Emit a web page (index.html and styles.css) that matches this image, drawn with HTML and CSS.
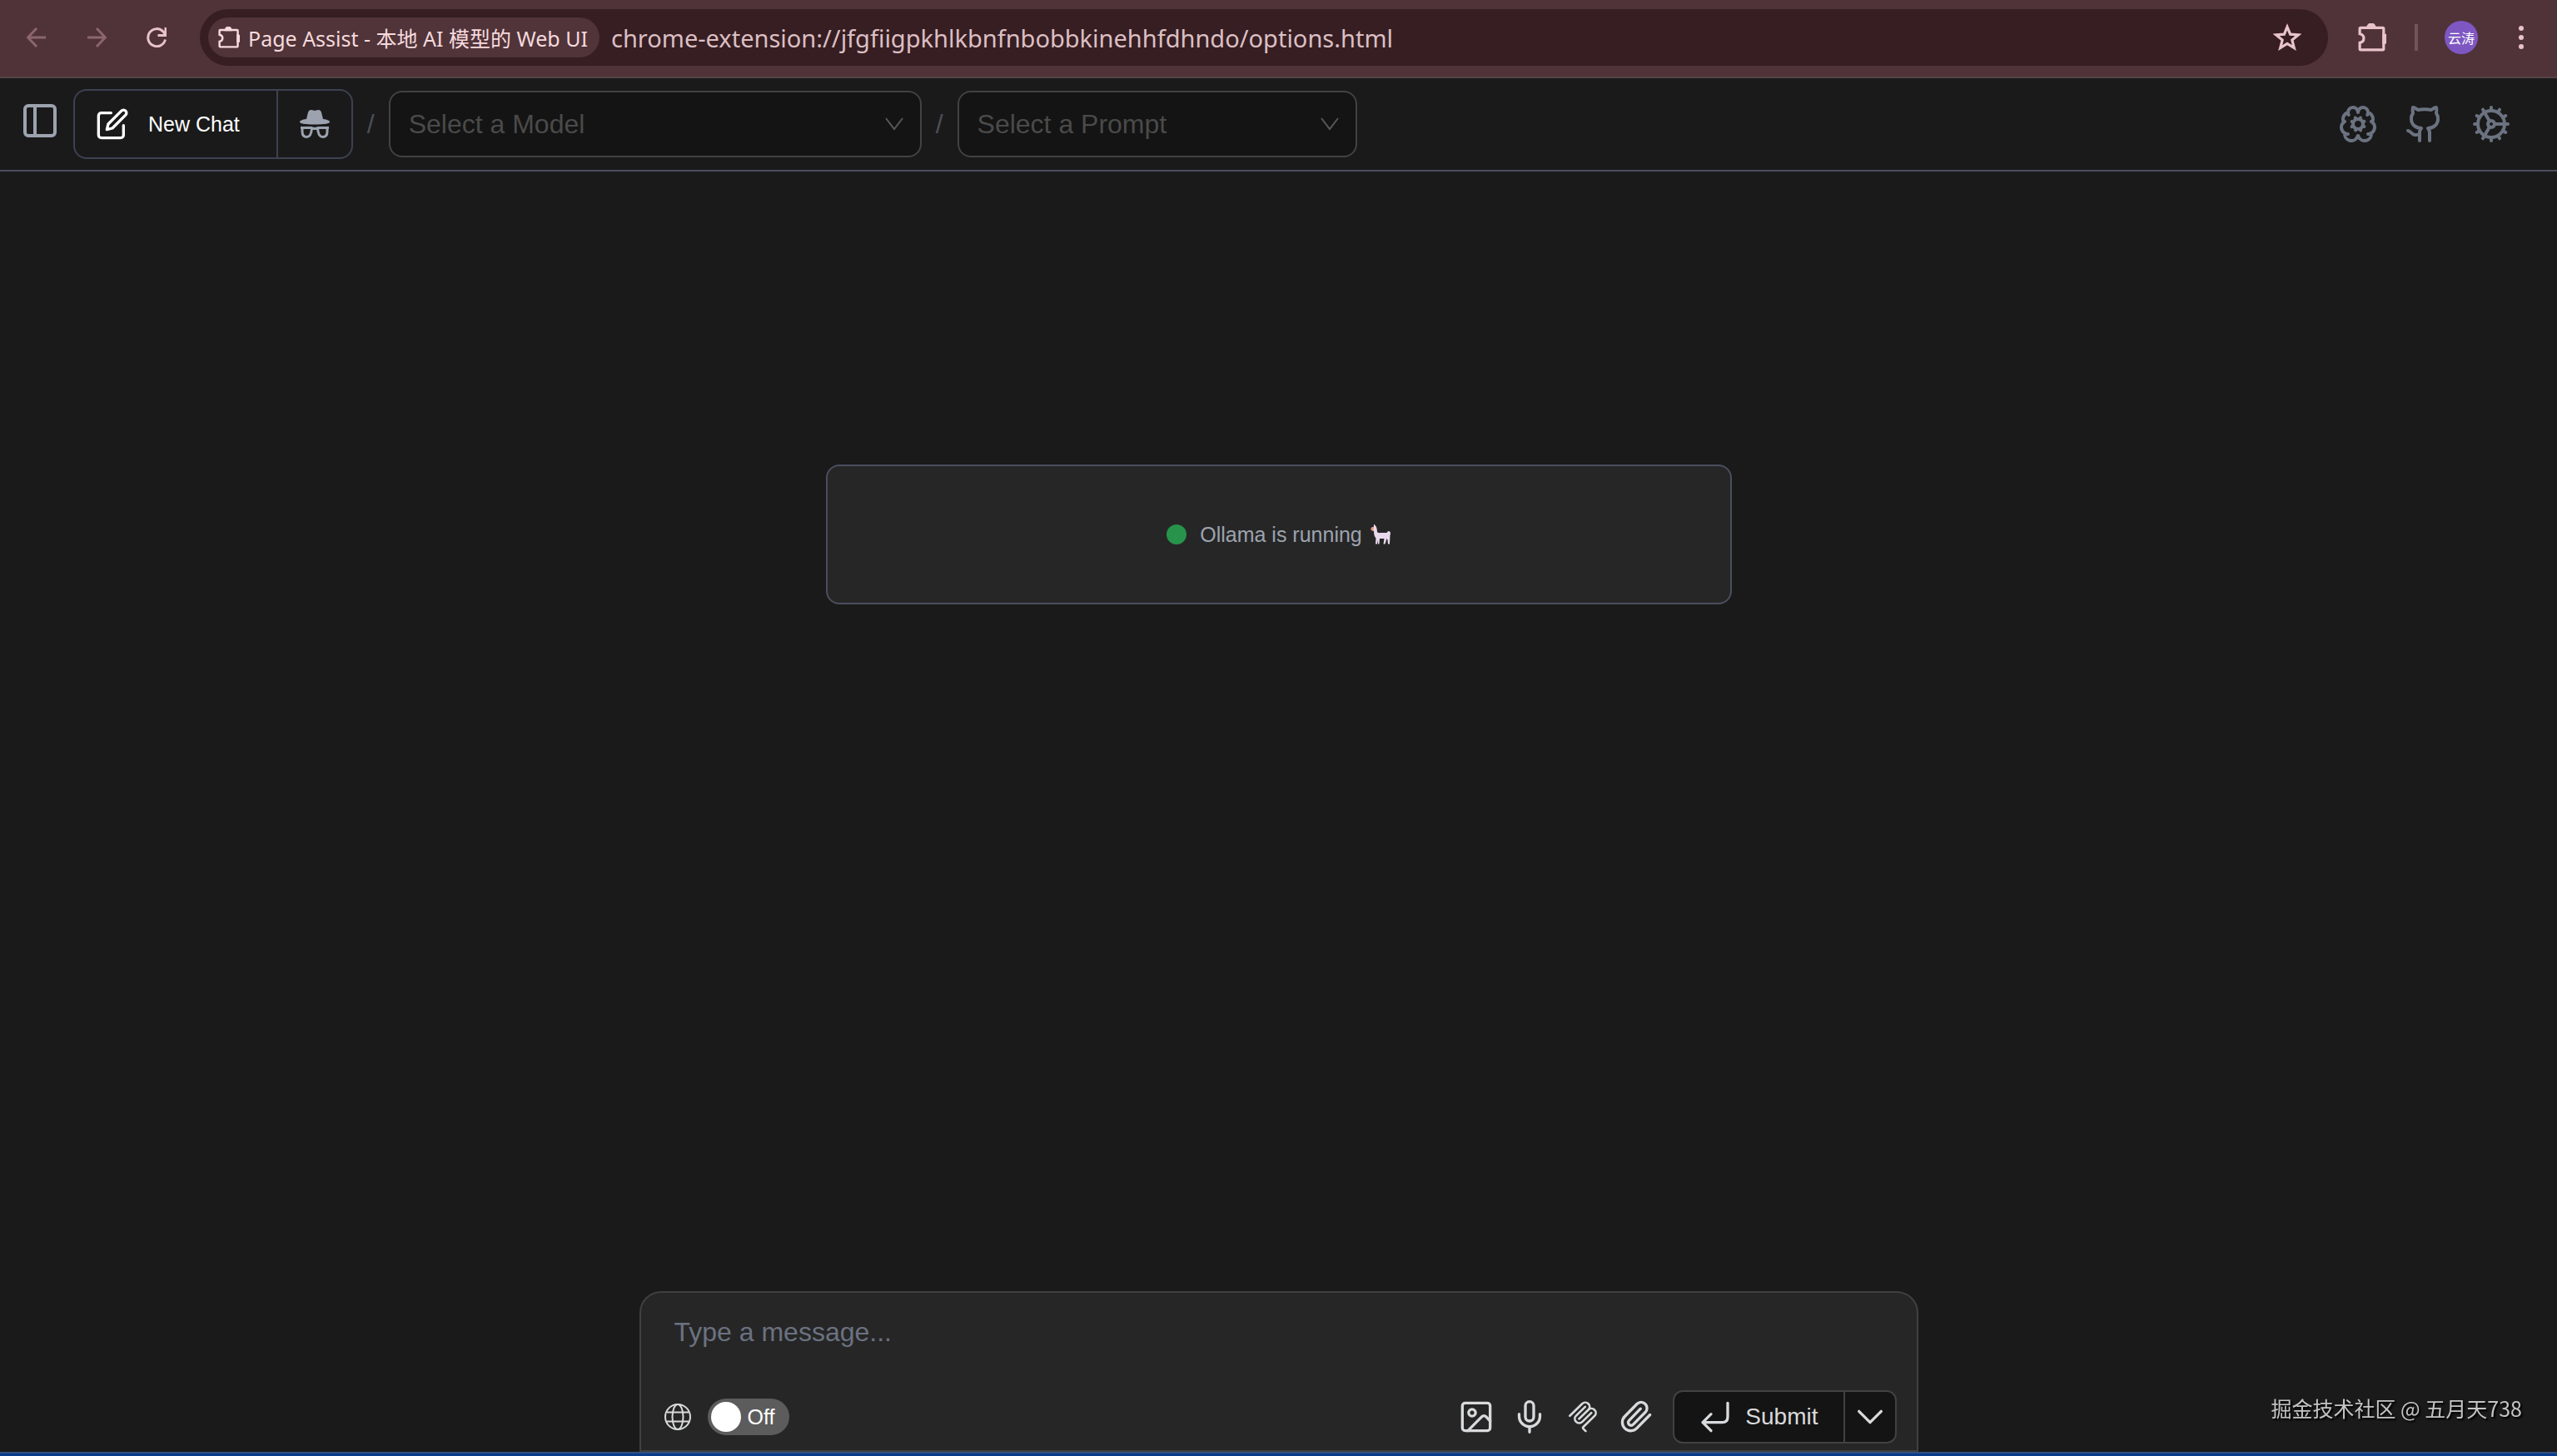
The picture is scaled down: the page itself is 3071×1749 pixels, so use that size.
FILE: index.html
```html
<!DOCTYPE html>
<html lang="zh-CN">
<head>
    <meta charset="UTF-8" />
    <meta name="viewport" content="width=device-width, initial-scale=1.0">
    <title>Page Assist - 本地 AI 模型的 Web UI</title>
    <link rel="stylesheet" href="styles.css">
</head>
<body>
    <nav class="toolbar">
        <button class="nav-button disabled" aria-label="Back">
            <svg viewBox="0 0 24 24"><path d="M23 12H1.5M12 1 1.5 12 12 23" /></svg>
        </button>
        <button class="nav-button disabled" aria-label="Forward">
            <svg viewBox="0 0 24 24"><path d="M1 12h21.5M12 1l10.5 11L12 23" /></svg>
        </button>
        <button class="nav-button" aria-label="Reload">
            <svg viewBox="0 0 24 24"><path d="M22.5 14.5A10.5 10.5 0 1 1 20 5l2.5 3.5M23 0v9.5h-9.5" /></svg>
        </button>
        <div class="address">
            <span class="chip">
                <svg class="puzzle" viewBox="0 0 32 32"><path d="M3 5h25q1 0 1 1v23q0 1-1 1H3q-1 0-1-1v-7c6-1 6-9 0-10V6q0-1 1-1z" /><path class="solid" d="M11 5a4 4 0 0 1 8 0zM29 13a4 4 0 0 1 0 9z" /></svg>
                Page Assist - 本地 AI 模型的 Web UI
            </span>
            <input class="url" type="text" aria-label="Address" value="chrome-extension://jfgfiigpkhlkbnfnbobbkinehhfdhndo/options.html">
            <button class="star" aria-label="Bookmark">
                <svg viewBox="0 0 32 32"><path d="m16 4 3.4 8.4 9.1.7-7 5.8 2.3 8.9L16 23l-7.8 4.8 2.3-8.9-7-5.8 9.1-.7z" /></svg>
            </button>
        </div>
        <div class="toolbar-actions">
            <button aria-label="Extensions">
                <svg class="puzzle" viewBox="0 0 32 32"><path d="M3 5h25q1 0 1 1v23q0 1-1 1H3q-1 0-1-1v-7c6-1 6-9 0-10V6q0-1 1-1z" /><path class="solid" d="M11 5a4 4 0 0 1 8 0zM29 13a4 4 0 0 1 0 9z" /></svg>
            </button>
            <span class="separator"></span>
            <button class="avatar">云涛</button>
            <button class="more" aria-label="Menu">
                <svg viewBox="0 0 6 28"><circle cx="3" cy="3" r="3" /><circle cx="3" cy="14" r="3" /><circle cx="3" cy="25" r="3" /></svg>
            </button>
        </div>
    </nav>

    <header>
        <button class="sidebar-button" aria-label="Sidebar">
            <svg class="icon" viewBox="0 0 24 24"><rect x="3" y="3" width="18" height="18" rx="2" /><path d="M9 3v18" /></svg>
        </button>
        <div class="chat-group">
            <button class="new-chat">
                <svg class="icon" viewBox="0 0 24 24"><path d="M11 4H4a2 2 0 0 0-2 2v14a2 2 0 0 0 2 2h14a2 2 0 0 0 2-2v-7" /><path d="M18.5 2.5a2.12 2.12 0 0 1 3 3L12 15l-4 1 1-4z" /></svg>
                New Chat
            </button>
            <button class="incognito" aria-label="Temporary chat">
                <svg viewBox="0 0 36 34"><path d="M8 11 10 3Q11 0 13.500 0q1.500 0 4.500 1 3-1 4.500-1 2.500 0 3.500 3l2 8q8 1 8 3.500 0 3-18 3t-18-3Q0 12 8 11z" /><path class="line" d="M1 21.500h13q4 2 8 0h13M3 22v4c0 4 2 6.500 5.500 6.500S14 29 14.500 22M33 22v4c0 4-2 6.500-5.500 6.500S22 29 21.500 22" /></svg>
            </button>
        </div>
        <span class="slash">/</span>
        <div class="select-box model">
            <select aria-label="Model"><option>Select a Model</option></select>
            <svg viewBox="0 0 24 24"><path d="M2 5l10 13L22 5" /></svg>
        </div>
        <span class="slash">/</span>
        <div class="select-box prompt">
            <select aria-label="Prompt"><option>Select a Prompt</option></select>
            <svg viewBox="0 0 24 24"><path d="M2 5l10 13L22 5" /></svg>
        </div>
        <div class="header-links">
            <a href="#" aria-label="Model settings">
                <svg class="icon" viewBox="0 0 24 24"><path d="M12 5a3 3 0 1 0-5.997.125 4 4 0 0 0-2.526 5.771 4 4 0 0 0 .556 6.588 4 4 0 0 0 7.636 2.106 3.2 3.2 0 0 0 .164-.546c.028-.13.306-.13.335 0a3.2 3.2 0 0 0 .163.546 4 4 0 0 0 7.636-2.106 4 4 0 0 0 .556-6.588 4 4 0 0 0-2.526-5.771A3 3 0 1 0 12 5M17.599 6.5a3 3 0 0 0 .399-1.375M6.003 5.125A3 3 0 0 0 6.401 6.5M3.477 10.896a4 4 0 0 1 .585-.396M19.938 10.5a4 4 0 0 1 .585.396M6 18a4 4 0 0 1-1.967-.516M19.967 17.484A4 4 0 0 1 18 18" /><circle cx="12" cy="12" r="3" /><path d="m15.7 10.4-.9.4M9.2 13.2l-.9.4M13.6 15.7l-.4-.9M10.8 9.2l-.4-.9M15.7 13.5l-.9-.4M9.2 10.9l-.9-.4M10.5 15.7l.4-.9M13.1 9.2l.4-.9" /></svg>
            </a>
            <a href="#" aria-label="GitHub">
                <svg class="icon" viewBox="0 0 24 24"><path d="M15 22v-4a4.8 4.8 0 0 0-1-3.5c3 0 6-2 6-5.5.08-1.25-.27-2.48-1-3.5.28-1.15.28-2.35 0-3.5 0 0-1 0-3 1.5-2.64-.5-5.36-.5-8 0C6 2 5 2 5 2c-.3 1.15-.3 2.35 0 3.5A5.4 5.4 0 0 0 4 9c0 3.5 3 5.5 6 5.5-.39.49-.68 1.05-.85 1.65-.17.6-.22 1.23-.15 1.85v4" /><path d="M9 18c-4.51 2-5-2-7-2" /></svg>
            </a>
            <a href="#" aria-label="Settings">
                <svg class="icon" viewBox="0 0 24 24"><circle cx="12" cy="12" r="8" /><circle cx="12" cy="12" r="2" /><path d="M12 2v2M12 22v-2m5 .66-1-1.73M11 10.27 7 3.34M20.66 17l-1.73-1M3.34 7l1.73 1M14 12h8M2 12h2M20.66 7l-1.73 1M3.34 17l1.73-1M17 3.34l-1 1.73M11 13.73l-4 6.93" /></svg>
            </a>
        </div>
    </header>

    <main>
        <div class="status">
            <span class="dot"></span>
            <p>Ollama is running</p>
            <svg class="llama" viewBox="0 0 24 24"><path class="body" d="M4 0q1-.5 1.500 1L7 3q1 3 1 6 1 1.500 4 1h7q1.500-.5 1.500-1.500 2-1 3 .5 1 1.500 0 4l-.5 10.500h-2l-.5-5-1-1.500-2 6.500h-2l1-6.500h-5.500l-.5 6.500H9l-.5-5-.5 5H6l.5-7Q4 14 4 8L1.500 7Q0 6 1 4l3-1.500z" /><path class="face" d="M1 4q1.500-1.500 3-1l-.5 4-2 .5Q0 6 1 4z" /></svg>
        </div>
    </main>

    <form class="composer">
        <textarea rows="1" aria-label="Message" placeholder="Type a message..."></textarea>
        <div class="composer-bar">
            <div class="search-toggle">
                <svg class="globe" viewBox="0 0 32 32"><circle cx="16" cy="16" r="15" /><ellipse cx="16" cy="16" rx="6.5" ry="15" /><path d="M3 10.5h26M3 21.5h26" /></svg>
                <label class="switch"><input type="checkbox" role="switch" aria-label="Search internet"><span>Off</span></label>
            </div>
            <div class="composer-actions">
                <button type="button" aria-label="Image">
                    <svg class="icon" viewBox="0 0 24 24"><rect x="2" y="2" width="20" height="20" rx="2" /><circle cx="9" cy="9" r="2.5" /><path d="m22 15-3-3.2a2 2 0 0 0-2.9 0L6 22" /></svg>
                </button>
                <button type="button" aria-label="Voice">
                    <svg class="icon" viewBox="0 0 24 24"><rect x="9" y="1" width="6" height="14" rx="3" /><path d="M19.5 10v1.5a7.5 7.5 0 0 1-15 0V10M12 19.5V23" /></svg>
                </button>
                <button type="button" aria-label="MCP">
                    <svg class="mcp" viewBox="-1 -1 26 26"><path d="M15.688 2.343a2.588 2.588 0 0 0-3.61 0l-9.626 9.44a.863.863 0 0 1-1.203 0 .823.823 0 0 1 0-1.18l9.626-9.44a4.313 4.313 0 0 1 6.016 0 4.116 4.116 0 0 1 1.204 3.54 4.3 4.3 0 0 1 3.609 1.18l.05.05a4.115 4.115 0 0 1 0 5.9l-8.706 8.537a.274.274 0 0 0 0 .393l1.788 1.754a.823.823 0 0 1 0 1.18.863.863 0 0 1-1.203 0l-1.788-1.753a1.92 1.92 0 0 1 0-2.754l8.706-8.538a2.47 2.47 0 0 0 0-3.54l-.05-.049a2.588 2.588 0 0 0-3.607-.003l-7.172 7.034-.002.002-.098.097a.863.863 0 0 1-1.204 0 .823.823 0 0 1 0-1.18l7.273-7.133a2.47 2.47 0 0 0-.003-3.537z" /><path d="M14.485 4.703a.823.823 0 0 0 0-1.18.863.863 0 0 0-1.204 0l-7.119 6.982a4.115 4.115 0 0 0 0 5.9 4.314 4.314 0 0 0 6.016 0l7.12-6.982a.823.823 0 0 0 0-1.18.863.863 0 0 0-1.204 0l-7.119 6.982a2.588 2.588 0 0 1-3.61 0 2.47 2.47 0 0 1 0-3.54l7.12-6.982z" /></svg>
                </button>
                <button type="button" aria-label="Attach file">
                    <svg class="icon" viewBox="0 0 24 24"><path d="m22 10.5-9.5 9.7a6 6 0 0 1-8.7-8.5l8.8-9a4.2 4.2 0 0 1 6 6l-8.7 8.8a2 2 0 0 1-3-2.9l8.3-8.5" /></svg>
                </button>
                <div class="submit-group">
                    <button type="submit" class="submit">
                        <svg class="icon" viewBox="0 0 24 24"><path d="M9 10l-6 6 6 6M3 16h14q4 0 4-4V2" /></svg>
                        Submit
                    </button>
                    <button type="button" class="submit-more" aria-label="More options">
                        <svg class="icon" viewBox="0 0 24 24"><path d="m4 8 8 8 8-8" /></svg>
                    </button>
                </div>
            </div>
        </div>
    </form>
    <footer></footer>
    <div class="watermark">掘金技术社区 @ 五月天738</div>
</body>
</html>
```
FILE: styles.css
```css
* {
    margin: 0;
    padding: 0;
    box-sizing: border-box;
}

body {
    height: 100vh;
    display: flex;
    flex-direction: column;
    background-color: #1a1a1a;
    color: white;
    font-family: "Liberation Sans", Arial, sans-serif;
    overflow: hidden;
}

button, input, select, textarea {
    border: none;
    background: none;
    color: inherit;
    font-family: inherit;
    outline: none;
}

a {
    color: inherit;
}

svg {
    display: block;
    flex-shrink: 0;
    fill: none;
    stroke: currentColor;
    stroke-width: 2;
}

.icon {
    stroke-linecap: round;
    stroke-linejoin: round;
}

.toolbar {
    display: flex;
    align-items: center;
    height: 94px;
    padding: 0 40px 2px 32px;
    background-color: #503338;
    border-bottom: 2px solid #564347;
    color: #e8c3c9;
    font-family: "Noto Sans", "Noto Sans CJK SC", sans-serif;
}

.nav-button {
    margin-right: 48px;
}

.nav-button svg {
    width: 24px;
    height: 24px;
    stroke-width: 3;
}

.nav-button.disabled {
    color: #8b666c;
}

.address {
    flex: 1;
    display: flex;
    align-items: center;
    height: 68px;
    margin-left: -8px;
    padding: 0 32px 0 10px;
    border-radius: 34px;
    background-color: #361e22;
}

.chip {
    display: flex;
    align-items: center;
    gap: 10px;
    height: 48px;
    padding: 0 14px 0 12px;
    border-radius: 24px;
    background-color: #503439;
    color: #f6dadd;
    font-size: 25px;
    white-space: nowrap;
}

.puzzle {
    width: 34px;
    height: 34px;
    stroke-width: 3;
}

.chip .puzzle {
    width: 26px;
    height: 26px;
}

.puzzle .solid {
    fill: currentColor;
}

.url {
    flex: 1;
    margin-left: 14px;
    color: #dcbfc3;
    font-size: 29px;
}

.star svg {
    width: 34px;
    height: 34px;
    stroke-width: 3;
}

.toolbar-actions {
    display: flex;
    align-items: center;
    margin-left: 36px;
}

.separator {
    width: 4px;
    height: 32px;
    margin: 0 32px 0 34px;
    background-color: #745459;
}

.avatar {
    width: 40px;
    height: 40px;
    margin-right: 49px;
    border-radius: 50%;
    background-color: #7e57c2;
    color: white;
    font-size: 16px;
    white-space: nowrap;
}

.more svg {
    width: 6px;
    height: 28px;
    fill: currentColor;
    stroke: none;
}

header {
    display: flex;
    align-items: center;
    height: 112px;
    padding: 0 55px 0 24px;
    border-bottom: 2px solid #4b4e5f;
}

.sidebar-button {
    margin-right: 16px;
    padding-bottom: 8px;
    color: #9ca3af;
}

.sidebar-button svg {
    width: 48px;
    height: 48px;
}

.chat-group {
    display: flex;
    height: 84px;
    border: 2px solid #3d4253;
    border-radius: 16px;
}

.new-chat {
    display: flex;
    align-items: center;
    gap: 23px;
    padding: 0 44px 0 25px;
    font-size: 25px;
    font-weight: 500;
}

.new-chat svg {
    width: 40px;
    height: 40px;
}

.incognito {
    width: 90px;
    border-left: 2px solid #3d4253;
    color: #9ca3af;
}

.incognito svg {
    width: 36px;
    height: 34px;
    margin: 0 auto;
    fill: currentColor;
    stroke: none;
}

.incognito .line {
    fill: none;
    stroke: currentColor;
    stroke-width: 3;
}

.slash {
    padding: 0 17px;
    color: #4b4e57;
    font-size: 32px;
}

.select-box {
    position: relative;
    height: 80px;
}

.select-box select {
    width: 100%;
    height: 100%;
    padding: 0 22px;
    border: 2px solid #424242;
    border-radius: 16px;
    background-color: #141414;
    color: #4a4a4a;
    font-size: 32px;
    appearance: none;
}

.select-box svg {
    position: absolute;
    top: 28px;
    right: 21px;
    width: 24px;
    height: 24px;
    color: #585858;
    pointer-events: none;
}

.model {
    width: 640px;
}

.prompt {
    width: 480px;
}

.header-links {
    display: flex;
    gap: 32px;
    margin-left: auto;
    color: #6b7280;
}

.header-links svg {
    width: 48px;
    height: 48px;
}

main {
    flex: 1;
    padding-top: 352px;
}

.status {
    display: flex;
    align-items: center;
    justify-content: center;
    width: 1088px;
    max-width: 100%;
    height: 168px;
    margin: 0 auto;
    border: 2px solid #4b4e5f;
    border-radius: 16px;
    background-color: #262626;
    color: #9ca3af;
    font-size: 25px;
}

.dot {
    width: 24px;
    height: 24px;
    margin-right: 16px;
    border-radius: 50%;
    background-color: #27934b;
}

.llama {
    width: 24px;
    height: 24px;
    margin-left: 10px;
    stroke: none;
}

.llama .body {
    fill: #ead9ec;
}

.llama .face {
    fill: #f0966c;
}

.composer {
    width: 1536px;
    max-width: 100%;
    margin: 0 auto;
    padding: 27px 24px 8px;
    border: 2px solid #404040;
    border-radius: 26px 26px 0 0;
    background-color: #262626;
    color: #d9dadc;
}

.composer textarea {
    display: block;
    width: 100%;
    height: 90px;
    padding: 0 16px;
    font-size: 32px;
    line-height: 40px;
    resize: none;
}

.composer textarea::placeholder {
    color: #6b7280;
}

.composer-bar,
.search-toggle,
.composer-actions {
    display: flex;
    align-items: center;
}

.composer-bar {
    justify-content: space-between;
}

.globe {
    width: 32px;
    height: 32px;
    margin: 0 20px 0 4px;
}

.switch {
    display: flex;
    align-items: center;
    height: 44px;
    padding: 0 18px 0 4px;
    border-radius: 22px;
    background-color: #5c5c5c;
    color: white;
    font-size: 25px;
}

.switch input {
    width: 36px;
    height: 36px;
    margin-right: 8px;
    border-radius: 50%;
    background-color: white;
    appearance: none;
}

.composer-actions {
    gap: 24px;
}

.composer-actions svg {
    width: 40px;
    height: 40px;
}

.composer-actions .mcp {
    fill: currentColor;
    stroke: none;
}

.submit-group {
    display: flex;
    height: 64px;
    border: 2px solid #424242;
    border-radius: 12px;
    background-color: #141414;
}

.submit {
    display: flex;
    align-items: center;
    gap: 16px;
    padding: 0 30px 0 29px;
    font-size: 28px;
}

.submit-more {
    padding: 0 10px;
    border-left: 2px solid #424242;
}

footer {
    height: 5px;
    background-color: #073b8c;
    border-top: 2px solid #31507f;
}

.watermark {
    position: fixed;
    right: 42px;
    bottom: 40px;
    color: #c4c4c4;
    font-family: "Noto Sans CJK SC", sans-serif;
    font-size: 25px;
    text-shadow: 2px 2px 2px black;
}
```
